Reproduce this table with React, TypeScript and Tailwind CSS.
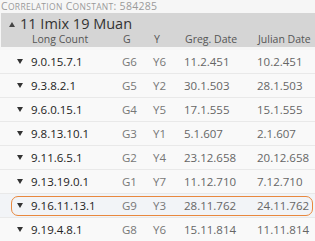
import React from "react";

interface Row {
  lc: string;
  g: string;
  y: string;
  greg: string;
  julian: string;
  mark?: boolean;
}

const rows: Row[] = [
  { lc: "9.0.15.7.1", g: "G6", y: "Y6", greg: "11.2.451", julian: "10.2.451" },
  { lc: "9.3.8.2.1", g: "G5", y: "Y2", greg: "30.1.503", julian: "28.1.503" },
  { lc: "9.6.0.15.1", g: "G4", y: "Y5", greg: "17.1.555", julian: "15.1.555" },
  { lc: "9.8.13.10.1", g: "G3", y: "Y1", greg: "5.1.607", julian: "2.1.607" },
  { lc: "9.11.6.5.1", g: "G2", y: "Y4", greg: "23.12.658", julian: "20.12.658" },
  { lc: "9.13.19.0.1", g: "G1", y: "Y7", greg: "11.12.710", julian: "7.12.710" },
  { lc: "9.16.11.13.1", g: "G9", y: "Y3", greg: "28.11.762", julian: "24.11.762", mark: true },
  { lc: "9.19.4.8.1", g: "G8", y: "Y6", greg: "15.11.814", julian: "11.11.814" },
];

const cols = "grid grid-cols-[31px_91px_31px_31px_73px_1fr] items-center";

const Caret = () => (
  <svg width="6" height="5" viewBox="0 0 6 5" className="ml-[17px]">
    <path d="M0 0 L6 0 L3 5 Z" fill="#333" />
  </svg>
);

export default function App() {
  return (
    <div
      className="w-[315px] h-[241px] overflow-hidden bg-[#f6f6f6] text-[#333]"
      style={{ fontFamily: '"Open Sans", "Noto Sans", sans-serif' }}
    >
      <div className="h-[13px] pl-[1px] text-[10.5px] leading-[13px] text-[#9a9a9a] tracking-[0.3px] whitespace-nowrap">
        C<span className="text-[8.5px]">ORRELATION</span> C<span className="text-[8.5px]">ONSTANT</span>: 584285
      </div>
      <div className="ml-[1px] h-[34px] bg-[#d5d5d5]">
        <div className="flex items-center h-[19px] pl-[8px] pt-[3px]">
          <svg width="6" height="5" viewBox="0 0 6 5">
            <path d="M0 5 L6 5 L3 0 Z" fill="#444" />
          </svg>
          <span className="ml-[5px] text-[14.5px] text-[#333]">11 Imix 19 Muan</span>
        </div>
        <div className={`${cols} h-[15px] text-[10.5px] text-[#555]`}>
          <span />
          <span>Long Count</span>
          <span>G</span>
          <span>Y</span>
          <span>Greg. Date</span>
          <span>Julian Date</span>
        </div>
      </div>
      <div className="mt-[3px]">
        {rows.map((r) => (
          <div
            key={r.lc}
            className={`h-[24px] border-b border-[#e9e9e9] relative ${r.mark ? "bg-[#f2f4f7]" : "bg-[#f9f9f9]"}`}
          >
            <div className={`${cols} h-full text-[11.5px]`}>
              <Caret />
              <span className="text-[#222]">{r.lc}</span>
              <span className="text-[#777]">{r.g}</span>
              <span className="text-[#777]">{r.y}</span>
              <span className="text-[#666]">{r.greg}</span>
              <span className="text-[#666]">{r.julian}</span>
            </div>
            {r.mark && (
              <div className="absolute left-[11px] right-[2px] top-[2px] bottom-[1px] border-[1.5px] border-[#e8883e] rounded-[7px]" />
            )}
          </div>
        ))}
      </div>
    </div>
  );
}
